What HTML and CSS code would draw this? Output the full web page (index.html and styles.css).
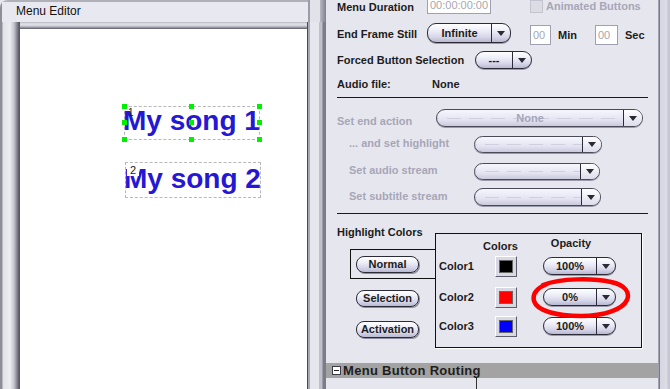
FILE: index.html
```html
<!DOCTYPE html>
<html lang="en">
<head>
    <meta charset="UTF-8">
    <meta name="viewport" content="width=device-width, initial-scale=1.0">
    <title>Menu Editor</title>
    <link rel="stylesheet" href="styles.css">
</head>
<body>
    <div class="app">
        <div class="editor">
            <div class="editor-title">Menu Editor</div>
            <div class="editor-body">
                <div class="canvas">
                    <div class="menu-item item-1 selected">
                        <span class="item-num">1</span>
                        <span class="item-text">My song 1</span>
                        <i class="handle h-tl"></i><i class="handle h-tc"></i><i class="handle h-tr"></i>
                        <i class="handle h-ml"></i><i class="handle h-mc"></i><i class="handle h-mr"></i>
                        <i class="handle h-bl"></i><i class="handle h-bc"></i><i class="handle h-br"></i>
                    </div>
                    <div class="menu-item item-2">
                        <span class="item-num boxed">2</span>
                        <span class="item-text">My song 2</span>
                    </div>
                </div>
            </div>
        </div>

        <div class="props">
            <div class="props-body">
                <div class="row row-duration">
                    <span class="label w-90 duration-label">Menu Duration</span>
                    <span class="field field-time">00:00:00:00</span>
                    <span class="checkbox"></span>
                    <span class="label disabled check-label">Animated Buttons</span>
                </div>

                <div class="row row-still">
                    <span class="label w-90">End Frame Still</span>
                    <div class="dropdown dd-still">
                        <span class="dd-value">Infinite</span>
                        <span class="dd-arrow"><svg width="8" height="5" viewBox="0 0 8 5"><path d="M0 0H8L4 5Z"/></svg></span>
                    </div>
                    <span class="field field-small first-small">00</span>
                    <span class="label unit">Min</span>
                    <span class="field field-small second-small">00</span>
                    <span class="label unit">Sec</span>
                </div>

                <div class="row row-forced">
                    <span class="label w-138">Forced Button Selection</span>
                    <div class="dropdown dd-forced">
                        <span class="dd-value">---</span>
                        <span class="dd-arrow"><svg width="8" height="5" viewBox="0 0 8 5"><path d="M0 0H8L4 5Z"/></svg></span>
                    </div>
                </div>

                <div class="row row-audio">
                    <span class="label w-95">Audio file:</span>
                    <span class="label">None</span>
                </div>

                <div class="divider divider-1"></div>

                <div class="row row-action">
                    <span class="label disabled w-99 low">Set end action</span>
                    <div class="dropdown disabled dd-action">
                        <span class="dd-value">None</span>
                        <span class="dd-arrow"><svg width="8" height="5" viewBox="0 0 8 5"><path d="M0 0H8L4 5Z"/></svg></span>
                    </div>
                </div>

                <div class="row row-sub row-highlight">
                    <span class="label disabled w-137 high">... and set highlight</span>
                    <div class="dropdown disabled dd-sub">
                        <span class="dd-value"></span>
                        <span class="dd-arrow"><svg width="8" height="5" viewBox="0 0 8 5"><path d="M0 0H8L4 5Z"/></svg></span>
                    </div>
                </div>

                <div class="row row-sub row-audio-stream">
                    <span class="label disabled w-137 high">Set audio stream</span>
                    <div class="dropdown disabled dd-sub dd-audio">
                        <span class="dd-value"></span>
                        <span class="dd-arrow"><svg width="8" height="5" viewBox="0 0 8 5"><path d="M0 0H8L4 5Z"/></svg></span>
                    </div>
                </div>

                <div class="row row-sub row-subtitle">
                    <span class="label disabled w-137 high">Set subtitle stream</span>
                    <div class="dropdown disabled dd-sub dd-subtitle">
                        <span class="dd-value"></span>
                        <span class="dd-arrow"><svg width="8" height="5" viewBox="0 0 8 5"><path d="M0 0H8L4 5Z"/></svg></span>
                    </div>
                </div>

                <div class="divider divider-2"></div>

                <div class="highlight">
                    <div class="states">
                        <div class="label states-title">Highlight Colors</div>
                        <div class="normal-tab">
                            <div class="state-btn">Normal</div>
                        </div>
                        <div class="state-btn btn-selection">Selection</div>
                        <div class="state-btn btn-activation">Activation</div>
                    </div>

                    <div class="color-box">
                        <div class="color-head">
                            <span class="label head-colors">Colors</span>
                            <span class="label head-opacity">Opacity</span>
                        </div>
                        <div class="color-row">
                            <span class="label color-name">Color1</span>
                            <span class="swatch"><span class="swatch-fill fill-black"></span></span>
                            <div class="dropdown dd-opacity">
                                <span class="dd-value">100%</span>
                                <span class="dd-arrow"><svg width="8" height="5" viewBox="0 0 8 5"><path d="M0 0H8L4 5Z"/></svg></span>
                            </div>
                        </div>
                        <div class="color-row row-2">
                            <span class="label color-name">Color2</span>
                            <span class="swatch"><span class="swatch-fill fill-red"></span></span>
                            <div class="dropdown dd-opacity">
                                <span class="dd-value">0%</span>
                                <span class="dd-arrow"><svg width="8" height="5" viewBox="0 0 8 5"><path d="M0 0H8L4 5Z"/></svg></span>
                            </div>
                        </div>
                        <div class="color-row row-3">
                            <span class="label color-name">Color3</span>
                            <span class="swatch"><span class="swatch-fill fill-blue"></span></span>
                            <div class="dropdown dd-opacity">
                                <span class="dd-value">100%</span>
                                <span class="dd-arrow"><svg width="8" height="5" viewBox="0 0 8 5"><path d="M0 0H8L4 5Z"/></svg></span>
                            </div>
                        </div>
                    </div>

                    <svg class="scribble" width="100" height="44" viewBox="0 0 100 44">
                        <path d="M12 9C30 2 62 2 80 6C95 9 99 17 96 24C92 33 74 40 50 40C26 40 6 35 3 25C1 17 6 12 16 8"/>
                    </svg>
                </div>
            </div>

            <div class="routing-bar">
                <span class="collapse-box"></span>
                <span class="routing-title">Menu Button Routing</span>
            </div>
            <div class="routing-body"></div>
        </div>

        <div class="edge"></div>
    </div>
</body>
</html>
```

FILE: styles.css
```css
* {
    box-sizing: border-box;
    margin: 0;
    padding: 0;
}

body {
    width: 670px;
    height: 389px;
    overflow: hidden;
    background-color: #e6e6ee;
    font-family: 'Liberation Sans', Arial, sans-serif;
    font-size: 11px;
    color: #1c1c1c;
}

.app {
    display: flex;
    height: 389px;
}

/* left: menu editor window */

.editor {
    width: 326px;
    display: flex;
    flex-direction: column;
}

.editor-title {
    height: 22px;
    padding: 3px 0 0 16px;
    font-size: 12px;
    line-height: 16px;
    color: #111;
    background:
        linear-gradient(to right, #8e8e98 0, #8e8e98 2px, transparent 2px) left top / 6px 100% no-repeat,
        linear-gradient(to right, transparent 0, transparent 1px, #9c9ca8 1px, #9c9ca8 3px, #e2e2ea 3px, #e2e2ea 13px, #b8b8c4 13px, #80808c 19px) right top / 19px 100% no-repeat,
        linear-gradient(to bottom, #b0b0b8 0, #b0b0b8 2px, #e8e8f0 2px);
    border-top-left-radius: 8px;
}

.editor-body {
    flex: 1;
    display: flex;
    padding: 7px 19px 0 20px;
    background:
        linear-gradient(to right, #8e8e98 0, #8e8e98 2px, #e2e2ea 3px, #ececf2 10px, #c4c4ce 14px, #5a5a66 19px) left top / 20px 100% no-repeat,
        linear-gradient(to right, #4a4a56 0, #4a4a56 1px, #a8a8b4 1px, #a8a8b4 3px, #e6e6ee 3px, #e6e6ee 12px, #c0c0cc 12px, #c0c0cc 15px, #7c7c88 16px) right top / 19px 100% no-repeat,
        linear-gradient(to bottom, #b4b4bc 0, #e4e4ec 2px, #cdcdd6 4px, #5e5e6a 7px);
}

.canvas {
    flex: 1;
    position: relative;
    background-color: #fff;
}

.menu-item {
    position: absolute;
    width: 136px;
    border: 1px dashed #b8b8b8;
}

.item-1 {
    left: 104px;
    top: 77px;
    height: 34px;
}

.item-2 {
    left: 105px;
    top: 133px;
    height: 36px;
    padding-top: 2px;
}

.item-text {
    display: block;
    margin-left: -2px;
    font-size: 28px;
    line-height: 28px;
    font-weight: bold;
    color: #2418d4;
    white-space: nowrap;
}

.item-num {
    position: absolute;
    left: 3px;
    top: 1px;
    font-size: 10px;
    line-height: 10px;
    color: #222;
    z-index: 2;
}

.item-num.boxed {
    left: 1px;
    top: 2px;
    width: 12px;
    height: 11px;
    padding-left: 3px;
    background-color: #fff;
    font-size: 11px;
    line-height: 11px;
}

.handle {
    position: absolute;
    width: 5px;
    height: 5px;
    background-color: #00f000;
    z-index: 3;
}

.h-tl, .h-ml, .h-bl { left: -3px; }
.h-tc, .h-mc, .h-bc { left: 64px; }
.h-tr, .h-mr, .h-br { right: -3px; }
.h-tl, .h-tc, .h-tr { top: -3px; }
.h-ml, .h-mc, .h-mr { top: 13px; }
.h-bl, .h-bc, .h-br { bottom: -3px; }

/* right: properties panel */

.props {
    width: 332px;
    display: flex;
    flex-direction: column;
    background-color: #e6e6ee;
}

.props-body {
    padding: 0 10px 0 11px;
}

.row {
    display: flex;
    align-items: center;
}

.label {
    font-weight: bold;
    line-height: 12px;
    white-space: nowrap;
    flex-shrink: 0;
}

.label.disabled {
    color: #a6a6b8;
}

.w-90 { width: 90px; }
.w-95 { width: 95px; }
.w-99 { width: 99px; }
.w-138 { width: 138px; }
.w-137 { width: 137px; padding-left: 12px; }

.low { margin-top: 6px; }
.high { margin-top: -3px; }

.field {
    background-color: #fff;
    border: 1px solid #a0a0b0;
    color: #a8a8b0;
    font-size: 11px;
    line-height: 16px;
    padding-left: 2px;
    flex-shrink: 0;
}

.row-duration {
    height: 18px;
    margin-top: -4px;
}

.duration-label {
    margin-top: 3px;
}

.field-time {
    width: 64px;
    height: 18px;
}

.checkbox {
    width: 13px;
    height: 13px;
    margin-left: 39px;
    margin-top: 3px;
    border: 1px solid #c4c4d0;
    background-color: #dcdce4;
}

.check-label {
    margin-left: 3px;
    margin-top: 2px;
}

.row-still {
    height: 21px;
    margin-top: 9px;
}

.field-small {
    width: 21px;
    height: 20px;
    line-height: 18px;
    margin-top: 2px;
}

.first-small { margin-left: 19px; }
.second-small { margin-left: 18px; width: 23px; }

.unit {
    margin-left: 7px;
    margin-top: 2px;
}

.row-forced {
    height: 18px;
    margin-top: 7px;
}

.row-audio {
    height: 14px;
    margin-top: 8px;
}

.divider {
    height: 1px;
    background-color: #1a1a1a;
}

.divider-1 { margin-top: 6px; }
.divider-2 { margin-top: 7px; }

.row-action {
    height: 18px;
    margin-top: 11px;
}

.row-highlight {
    height: 17px;
    margin-top: 9px;
}

.row-audio-stream {
    height: 17px;
    margin-top: 10px;
}

.row-subtitle {
    height: 18px;
    margin-top: 8px;
}

/* dropdown pill */

.dropdown {
    display: flex;
    height: 18px;
    flex-shrink: 0;
    border: 1px solid #2c2c38;
    border-radius: 9px;
    overflow: hidden;
    background: linear-gradient(#ffffff, #ececf8 40%, #d4d4e8 75%, #b8b8d0);
    box-shadow: 0 1px 0 #9a9aaa;
    font-weight: bold;
}

.dd-value {
    flex: 1;
    text-align: center;
    line-height: 16px;
}

.dd-arrow {
    width: 19px;
    display: flex;
    align-items: center;
    justify-content: center;
    border-left: 1px solid #2c2c38;
}

.dd-arrow svg {
    fill: #2a2a34;
}

.dropdown.disabled {
    border-color: #4a4a58;
    color: #a4a4b8;
    background:
        linear-gradient(to right, #cfcfe0 0, #cfcfe0 14px, transparent 14px, transparent 22px) 10px 50% / 22px 1px repeat-x,
        linear-gradient(#f6f6fe, #e4e4f2 60%, #cacade);
}

.dropdown.disabled .dd-arrow {
    background: linear-gradient(#ffffff, #dcdcec);
}

.dd-still { width: 84px; height: 20px; margin-top: -1px; }
.dd-still .dd-value { line-height: 18px; }
.dd-forced { width: 57px; }
.dd-action { width: 207px; }
.dd-sub { width: 128px; height: 17px; }
.dd-audio { width: 126px; }
.dd-subtitle { width: 127px; height: 18px; }
.dd-opacity { width: 73px; }

/* highlight colors */

.highlight {
    position: relative;
    display: flex;
}

.states {
    width: 98px;
    flex-shrink: 0;
}

.states-title {
    margin-top: 12px;
}

.normal-tab {
    width: 85px;
    height: 30px;
    margin: 11px 0 0 13px;
    padding: 6px 0 0 5px;
    border: 1px solid #111;
    border-right: none;
}

.state-btn {
    width: 63px;
    height: 17px;
    border: 1px solid #2c2c38;
    border-radius: 8px;
    background: linear-gradient(#ffffff, #ececf8 40%, #d2d2e6 75%, #b8b8d0);
    box-shadow: 1px 1px 0 #8c8c9c;
    font-weight: bold;
    line-height: 15px;
    text-align: center;
}

.btn-selection { margin: 11px 0 0 19px; }
.btn-activation { margin: 14px 0 0 19px; }

.color-box {
    width: 207px;
    height: 115px;
    margin-top: 19px;
    padding-left: 3px;
    border: 1px solid #111;
    box-shadow: 1px 1px 0 #fff;
}

.color-head {
    display: flex;
    height: 21px;
}

.head-colors {
    margin: 6px 0 0 44px;
}

.head-opacity {
    margin: 3px 0 0 33px;
}

.color-row {
    display: flex;
    align-items: center;
    height: 22px;
}

.row-2 { margin-top: 9px; }
.row-3 { margin-top: 7px; }

.color-name {
    width: 56px;
}

.swatch {
    width: 22px;
    height: 21px;
    padding: 3px;
    flex-shrink: 0;
    border: 1px solid;
    border-color: #ffffff #5c5c6a #5c5c6a #ffffff;
    background-color: #d8d8e2;
}

.swatch-fill {
    display: block;
    width: 100%;
    height: 100%;
    border: 1px solid #666;
}

.fill-black { background-color: #000; }
.fill-red { background-color: #ff0000; }
.fill-blue { background-color: #0000ff; }

.color-row .dd-opacity {
    margin-left: 26px;
}

.scribble {
    position: absolute;
    left: 194px;
    top: 62px;
    fill: none;
    stroke: #ff0000;
    stroke-width: 4.5;
    stroke-linecap: round;
}

/* routing */

.routing-bar {
    display: flex;
    align-items: center;
    height: 15px;
    margin-top: 15px;
    background-color: #a3a3a3;
}

.collapse-box {
    position: relative;
    width: 9px;
    height: 9px;
    margin-left: 6px;
    border: 1px solid #3c3c48;
    background-color: #fff;
}

.collapse-box::after {
    content: '';
    position: absolute;
    left: 1px;
    top: 3px;
    width: 5px;
    height: 1px;
    background-color: #222;
}

.routing-title {
    margin-left: 2px;
    font-size: 13px;
    font-weight: bold;
    line-height: 15px;
    letter-spacing: 0.3px;
    color: #1e1e1e;
}

.routing-body {
    flex: 1;
    background: linear-gradient(to right, transparent 0, transparent 150px, #333 150px, #333 151px, transparent 151px);
}

.edge {
    width: 12px;
    background: linear-gradient(to right, #a0a0ae 0, #a0a0ae 1px, #7a7a88 1px, #7a7a88 2px, #d6d6e0 2px, #dcdce6 9px, #c6c6d2 10px);
}
```
